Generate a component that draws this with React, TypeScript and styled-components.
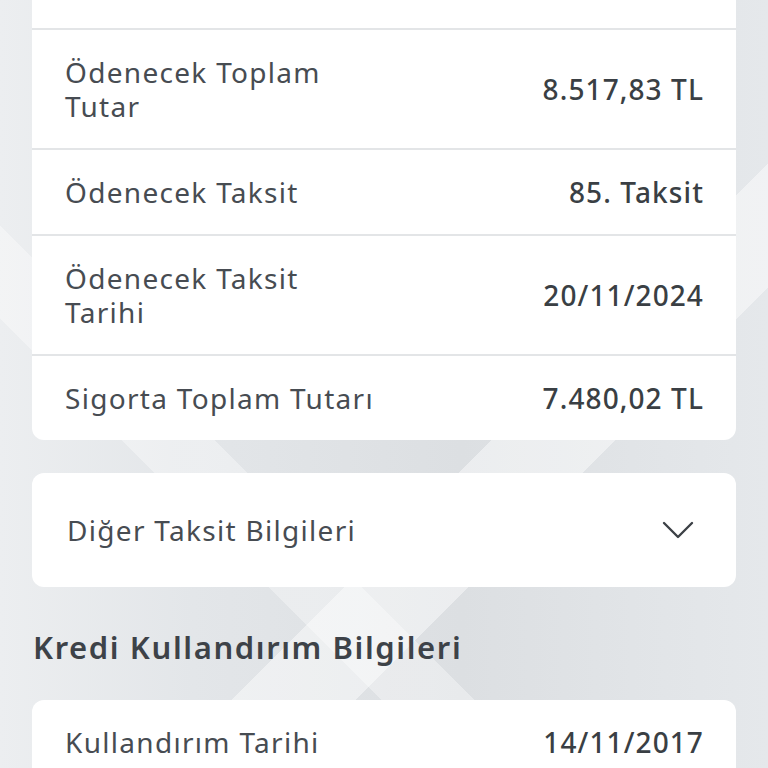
import styled, { createGlobalStyle } from 'styled-components'

const GlobalStyle = createGlobalStyle`
  html, body {
    margin: 0;
    padding: 0;
    height: 100%;
    overflow: hidden;
  }
  body {
    font-family: 'Noto Sans', 'Open Sans', sans-serif;
    color: #41464c;
  }
`

const rows = [
  { value: '8.517,83 TL', lines: ['Ödenecek Toplam', 'Tutar'] },
  { value: '85. Taksit', lines: ['Ödenecek Taksit'] },
  { value: '20/11/2024', lines: ['Ödenecek Taksit', 'Tarihi'] },
  { value: '7.480,02 TL', lines: ['Sigorta Toplam Tutarı'] }
]

function App () {
  return (
    <Page>
      <GlobalStyle />
      <Card $clipped>
        <Stub />
        {rows.map(row => (
          <Row key={row.lines.join(' ')}>
            <Label>
              {row.lines.map((line, i) => (
                <span key={line}>{i > 0 && <br />}{line}</span>
              ))}
            </Label>
            <Value>{row.value}</Value>
          </Row>
        ))}
      </Card>

      <Card>
        <Accordion>
          <AccordionTitle>Diğer Taksit Bilgileri</AccordionTitle>
          <svg width="32" height="20" viewBox="0 0 32 20" fill="none">
            <path d="M2 3 L16 17 L30 3" stroke="#3c4146" strokeWidth="2.4" strokeLinecap="round" strokeLinejoin="round" />
          </svg>
        </Accordion>
      </Card>

      <SectionTitle>Kredi Kullandırım Bilgileri</SectionTitle>

      <Card>
        <Row>
          <Label>Kullandırım Tarihi</Label>
          <Value>14/11/2017</Value>
        </Row>
      </Card>
    </Page>
  )
}

const Page = styled.div`
  min-height: 768px;
  padding: 0 32px;
  display: flex;
  flex-direction: column;
  background:
    linear-gradient(135deg, transparent 0 60%, rgba(255,255,255,0.45) 60% 68%, transparent 68%),
    linear-gradient(45deg, transparent 0 30%, rgba(255,255,255,0.35) 30% 36%, transparent 36%),
    linear-gradient(90deg, #eceef0 0%, #e3e6e9 25%, #dcdfe2 60%, #e5e8eb 100%);
`
const Card = styled.div<{ $clipped?: boolean }>`
  background: #fff;
  border-radius: 12px;
  overflow: hidden;
  margin-top: ${p => (p.$clipped ? '-12px' : '33px')};
`
const Stub = styled.div`
  height: 40px;
`
const Row = styled.div`
  display: flex;
  align-items: center;
  justify-content: space-between;
  padding: 25px 32px 25px 33px;
  border-top: 2px solid #e3e5e7;
  &:first-child {
    border-top: none;
  }
`
const Label = styled.div`
  font-size: 28px;
  line-height: 34px;
  letter-spacing: 1.3px;
  color: #474c52;
`
const Value = styled.div`
  font-size: 28px;
  line-height: 34px;
  font-weight: 500;
  letter-spacing: 1.1px;
  color: #3a3f44;
`
const Accordion = styled.div`
  display: flex;
  align-items: center;
  justify-content: space-between;
  height: 114px;
  padding: 0 42px 0 35px;
`
const AccordionTitle = styled.div`
  font-size: 28px;
  letter-spacing: 1.3px;
  color: #474c52;
`
const SectionTitle = styled.h2`
  margin: 40px 0 0 1px;
  font-size: 31px;
  line-height: 40px;
  font-weight: 600;
  letter-spacing: 1.6px;
  color: #3d4248;
`
export default App
